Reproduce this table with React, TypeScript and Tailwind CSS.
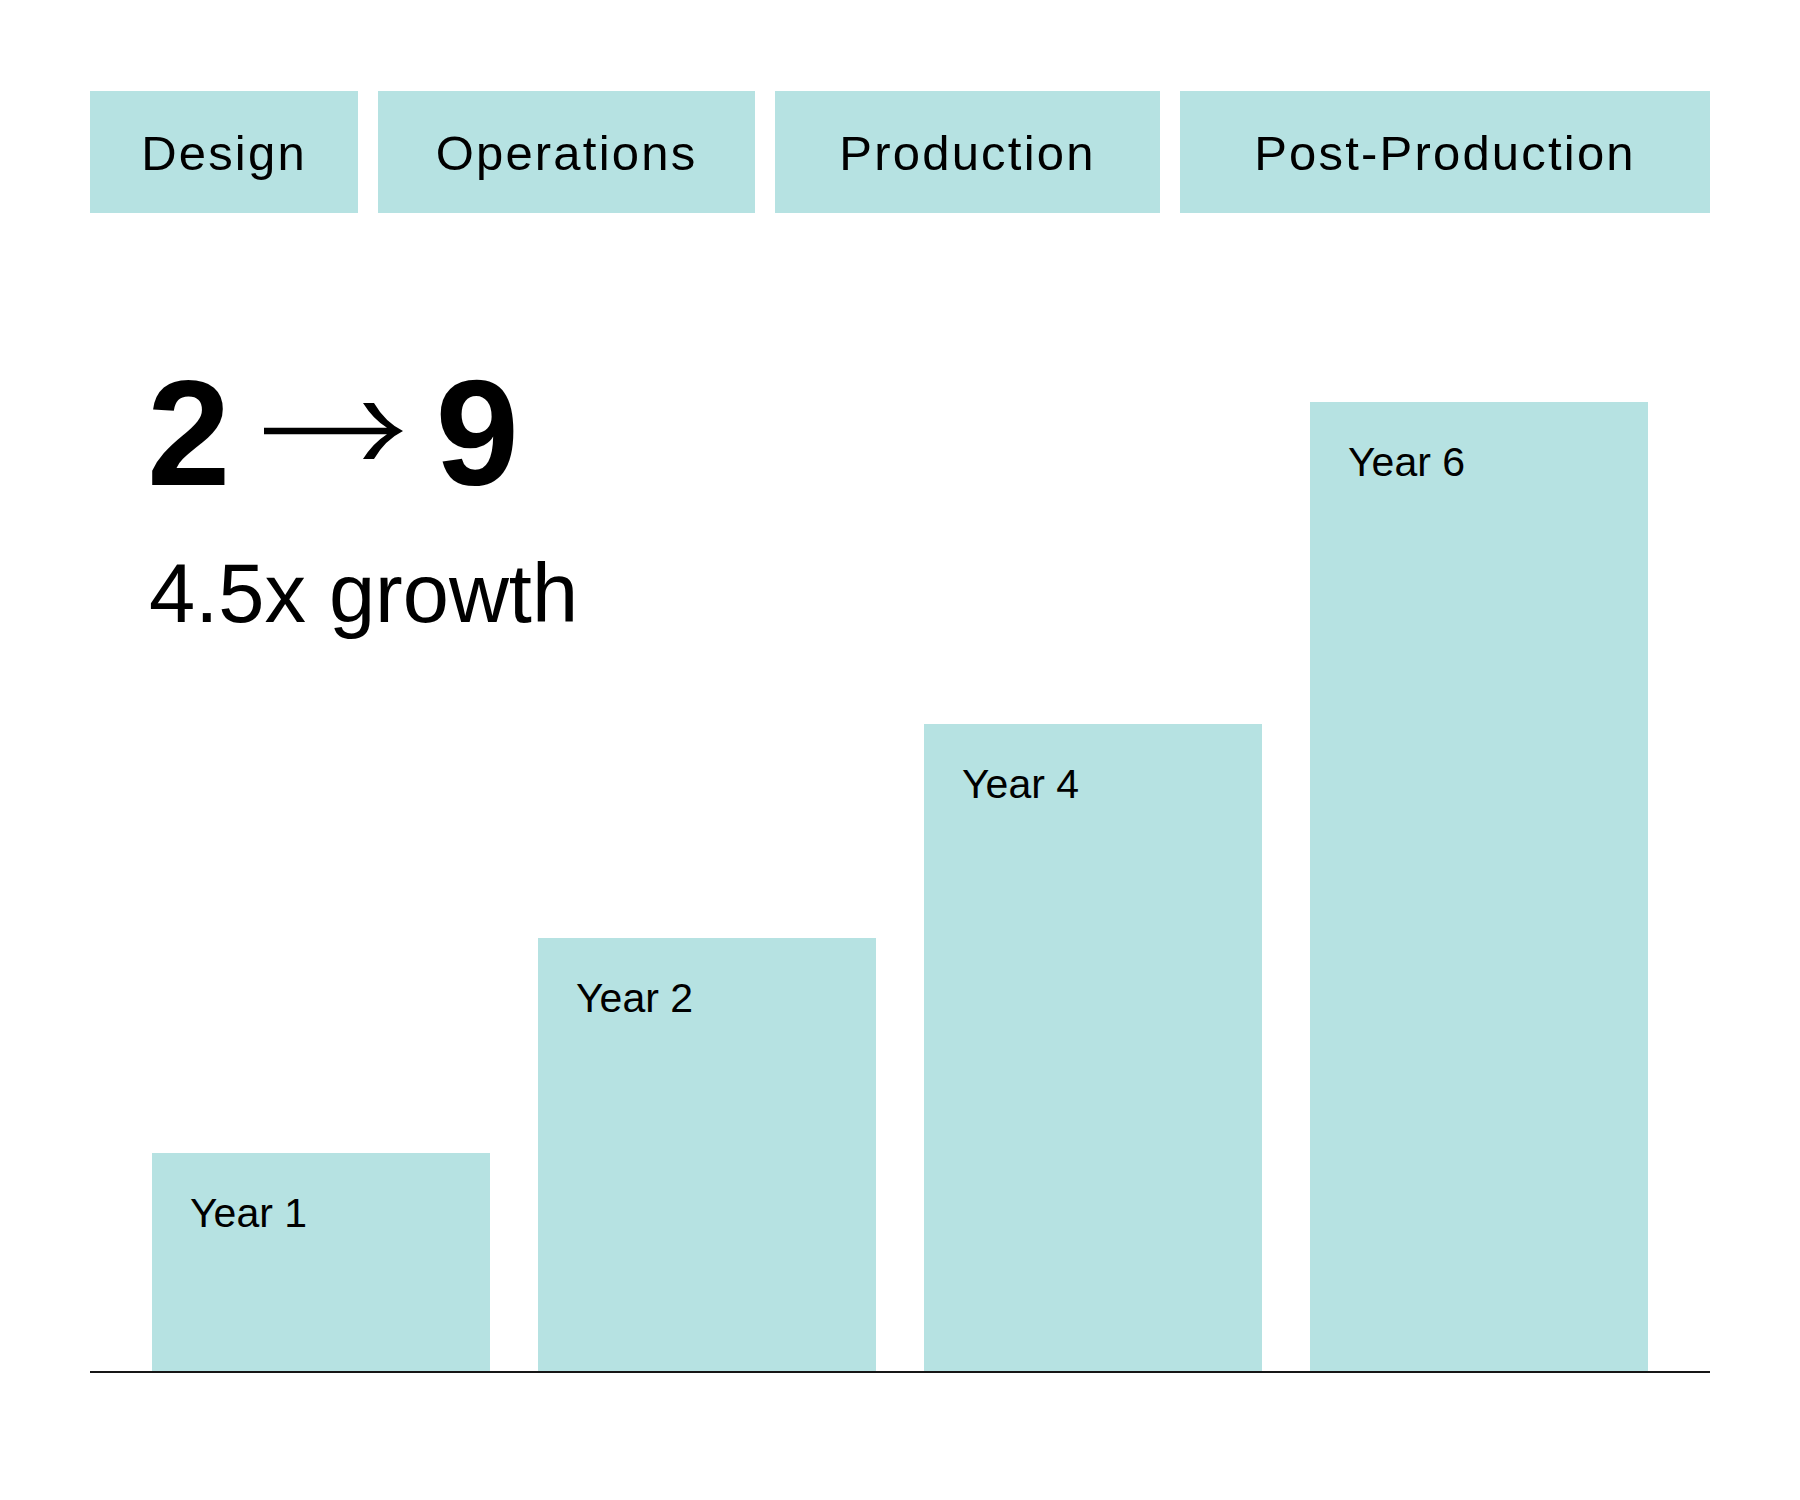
const phases = [
  { name: 'Design', width: 'w-[268px]' },
  { name: 'Operations', width: 'w-[377px]' },
  { name: 'Production', width: 'w-[385px]' },
  { name: 'Post-Production', width: 'w-[530px]' },
]

// team size per year — bar height is derived from the value
const years = [
  { label: 'Year 1', value: 2 },
  { label: 'Year 2', value: 4 },
  { label: 'Year 4', value: 6 },
  { label: 'Year 6', value: 9 },
]

const UNIT = 107.2

function Arrow() {
  return (
    <svg width="140" height="56" viewBox="0 0 140 56" className="mt-[45px] ml-[34px] mr-[31px] shrink-0" aria-hidden="true">
      <path
        d="M99 0 L110 0 Q121 19 139 28 Q121 37 110 56 L99 56 Q109 40 123 31.2 L0 31.2 L0 24.8 L123 24.8 Q109 16 99 0 Z"
        fill="#000"
      />
    </svg>
  )
}

export default function App() {
  return (
    <div className="min-h-[1500px] bg-white px-[90px] pt-[91px] font-['Liberation_Sans',Arial,sans-serif] text-black">
      {/* phase tabs */}
      <div className="flex w-[1620px] gap-5">
        {phases.map(p => (
          <div
            key={p.name}
            className={`${p.width} flex h-[122px] items-center justify-center bg-[#b6e2e2] pt-1 text-[49px] tracking-[2.2px]`}
          >
            {p.name}
          </div>
        ))}
      </div>

      {/* growth chart */}
      <div className="relative mt-[145px] flex h-[1015px] w-[1620px] items-end justify-between border-b-2 border-[#161616] px-[62px]">
        <div className="absolute left-[59px] top-0">
          <div className="-ml-[2px] flex items-start text-[150px] font-bold leading-none">
            <span>2</span>
            <Arrow />
            <span>9</span>
          </div>
          <div className="mt-[44px] text-[83px] leading-none">4.5x growth</div>
        </div>

        {years.map(y => (
          <div
            key={y.label}
            className="w-[338px] bg-[#b6e2e2] pl-[38px] pt-[40px]"
            style={{ height: y.value * UNIT + 4 }}
          >
            <div className="text-[41px] leading-none">{y.label}</div>
          </div>
        ))}
      </div>
    </div>
  )
}
